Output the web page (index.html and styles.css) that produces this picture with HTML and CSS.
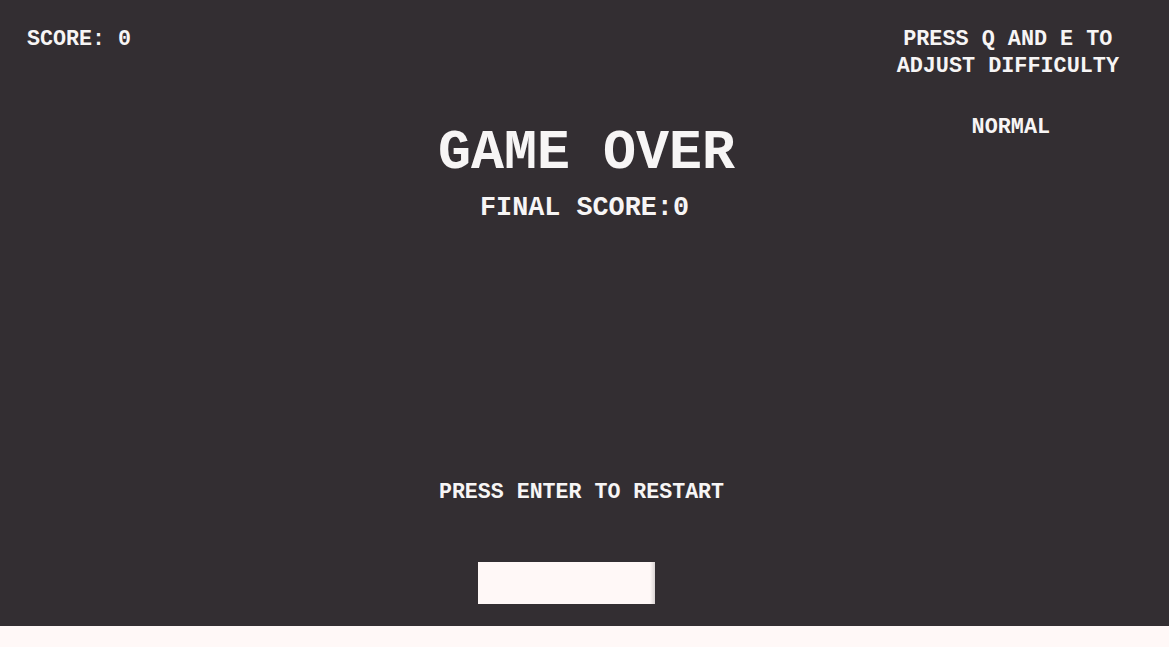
FILE: index.html
```html
<!DOCTYPE html>
<html lang="en">
<head>
<meta charset="utf-8">
<title>Pong</title>
<link rel="stylesheet" href="styles.css">
</head>
<body>
  <main class="game">
    <header class="hud">
      <div class="score">SCORE: 0</div>
      <div class="difficulty">
        <p class="hint">PRESS Q AND E TO<br>ADJUST DIFFICULTY</p>
        <p class="level">NORMAL</p>
      </div>
    </header>
    <section class="over">
      <h1 class="title">GAME OVER</h1>
      <p class="final">FINAL SCORE:0</p>
    </section>
    <p class="restart">PRESS ENTER TO RESTART</p>
    <div class="paddle"></div>
  </main>
  <footer class="floor"></footer>
</body>
</html>
```

FILE: styles.css
```css
html, body {
  margin: 0;
  padding: 0;
}

body {
  background: #fff8f7;
  font-family: "Liberation Mono", "DejaVu Sans Mono", monospace;
  font-weight: bold;
  color: #f7f5f5;
  overflow: hidden;
}

.game {
  position: relative;
  height: 626px;
  background: #332e32;
  display: flex;
  flex-direction: column;
}

.hud {
  display: flex;
  justify-content: space-between;
  align-items: flex-start;
  padding: 26px 50px 0 27px;
}

.score {
  font-size: 21.7px;
  line-height: 27px;
}

.difficulty {
  text-align: center;
  font-size: 21.8px;
  line-height: 27px;
}

.hint {
  margin: 0;
}

.level {
  margin: 34px 0 0;
  padding-left: 6px;
}

.over {
  margin-top: -19px;
  text-align: center;
}

.title {
  margin: 0 0 0 4px;
  font-size: 55px;
  line-height: 64px;
}

.final {
  margin: 6px 0 0;
  font-size: 26.8px;
  line-height: 32px;
}

.restart {
  margin: 255px 0 0;
  padding-right: 6px;
  text-align: center;
  font-size: 21.6px;
  line-height: 27px;
}

.paddle {
  position: absolute;
  left: 478px;
  top: 562px;
  width: 177px;
  height: 42px;
  background: linear-gradient(to right, #fff8f7 0, #fff8f7 172px, #d9d3d3 177px);
}

.floor {
  height: 21px;
}
```
